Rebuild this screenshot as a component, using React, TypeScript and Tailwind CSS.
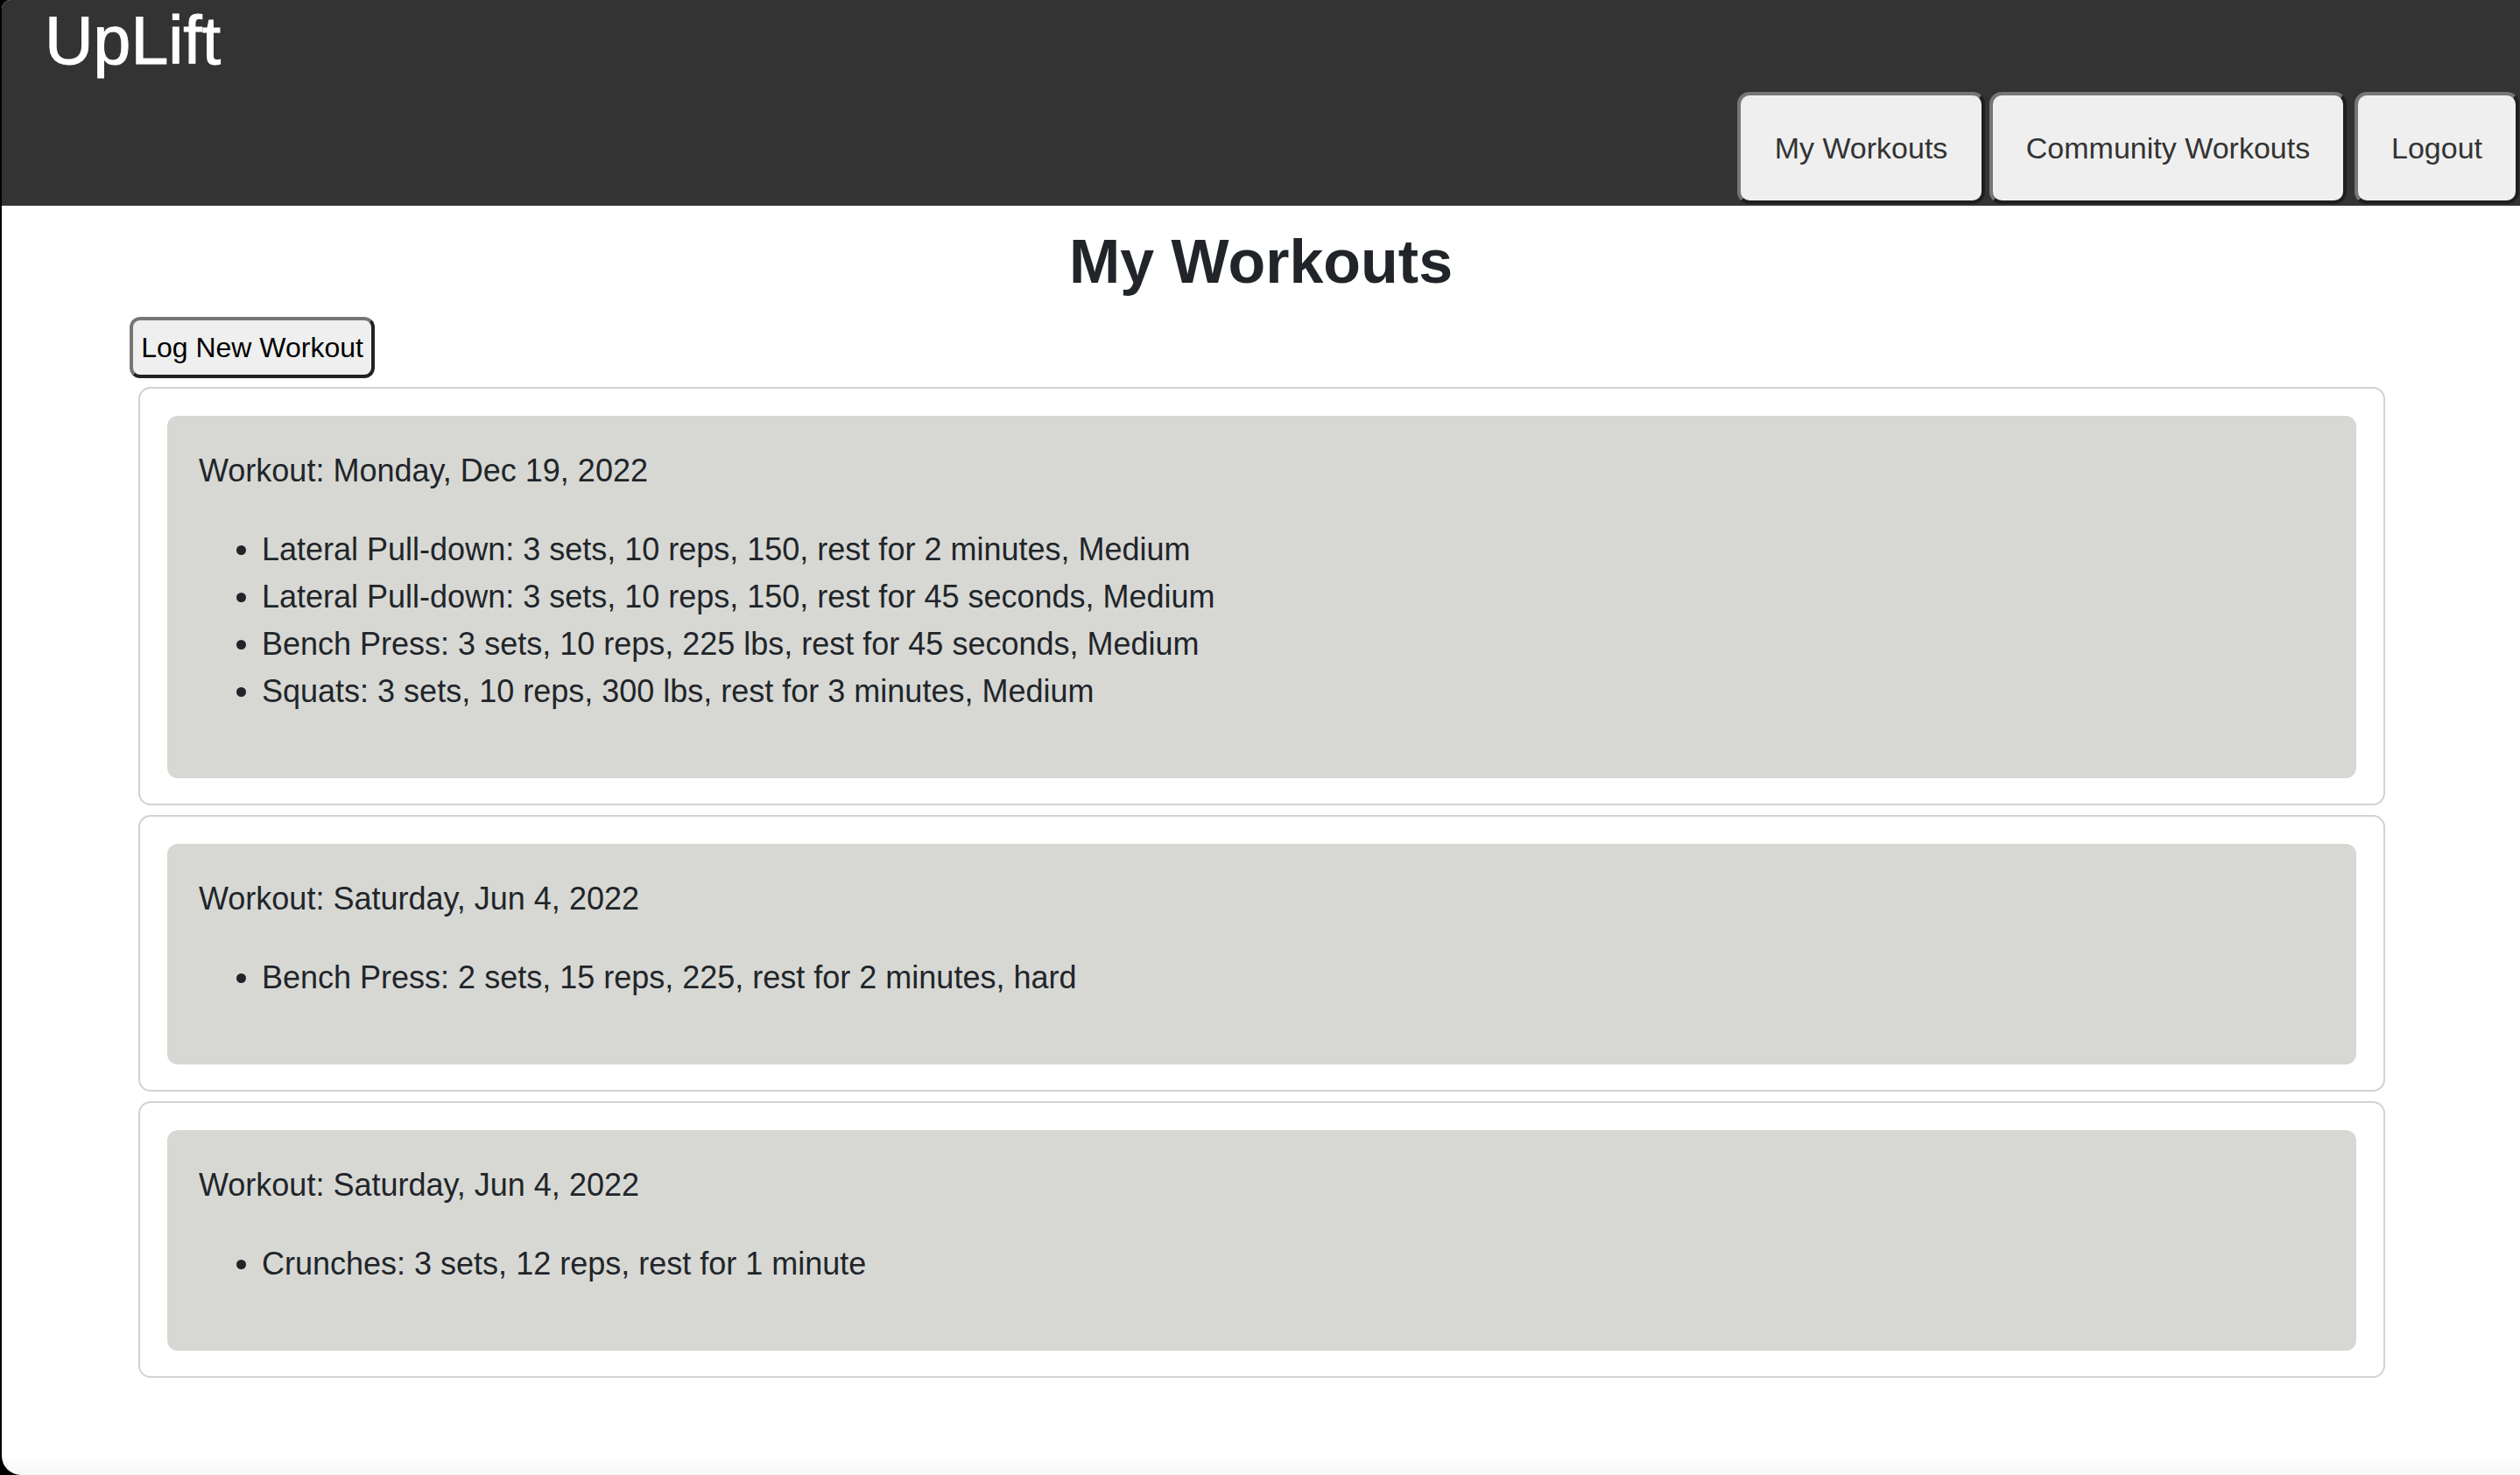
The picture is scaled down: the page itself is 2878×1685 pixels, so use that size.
import React from "react";

const workouts = [
  {
    title: "Workout: Monday, Dec 19, 2022",
    items: [
      "Lateral Pull-down: 3 sets, 10 reps, 150, rest for 2 minutes, Medium",
      "Lateral Pull-down: 3 sets, 10 reps, 150, rest for 45 seconds, Medium",
      "Bench Press: 3 sets, 10 reps, 225 lbs, rest for 45 seconds, Medium",
      "Squats: 3 sets, 10 reps, 300 lbs, rest for 3 minutes, Medium",
    ],
  },
  {
    title: "Workout: Saturday, Jun 4, 2022",
    items: ["Bench Press: 2 sets, 15 reps, 225, rest for 2 minutes, hard"],
  },
  {
    title: "Workout: Saturday, Jun 4, 2022",
    items: ["Crunches: 3 sets, 12 reps, rest for 1 minute"],
  },
];

function NavButton({ label, width }: { label: string; width: string }) {
  return (
    <button
      className={`${width} h-[128px] rounded-[14px] border-4 border-t-[#767676] border-l-[#767676] border-r-[#1f1f1f] border-b-[#1f1f1f] bg-[#efefef] text-[34px] text-[#333333]`}
    >
      {label}
    </button>
  );
}

export default function App() {
  return (
    <div className="h-[1685px] w-full overflow-hidden bg-black font-['Liberation_Sans',Arial,sans-serif]">
      <div className="ml-[2px] h-full overflow-hidden rounded-tl-[10px] rounded-bl-[22px] bg-white bg-gradient-to-b from-white from-[98.5%] to-[#f7f7f7]">
        <header className="flex h-[235px] flex-col bg-[#333333]">
          <h1 className="pl-[49px] pt-[8px] text-[77px] leading-none font-normal text-white [-webkit-text-stroke:1px_white]">
            UpLift
          </h1>
          <nav className="mt-auto mb-[2px] mr-[1px] flex items-end justify-end">
            <NavButton label="My Workouts" width="w-[283px]" />
            <div className="w-[5px]" />
            <NavButton label="Community Workouts" width="w-[408px]" />
            <div className="w-[9px]" />
            <NavButton label="Logout" width="w-[188px]" />
          </nav>
        </header>

        <main className="px-[146px]">
          <h2 className="mt-[22px] text-center text-[70px] font-bold leading-[84px] text-[#212529]">
            My Workouts
          </h2>
          <button className="mt-[21px] h-[70px] w-[280px] rounded-[12px] border-4 border-t-[#767676] border-l-[#767676] border-r-[#222222] border-b-[#222222] bg-[#efefef] text-[32px] text-black">
            Log New Workout
          </button>

          <div className="mt-[10px] ml-[10px] mr-[8px] flex flex-col gap-[11px]">
            {workouts.map((w, i) => (
              <div
                key={i}
                className="rounded-[14px] border-2 border-[#d2d2d2] bg-white px-[31px] pt-[31px] pb-[29px]"
              >
                <div className="rounded-[12px] bg-[#d7d8d4] p-[36px] text-[36px] leading-[54px] text-[#212529]">
                  <p className="mb-[36px]">{w.title}</p>
                  <ul className="mb-[36px] list-disc pl-[72px]">
                    {w.items.map((it, j) => (
                      <li key={j}>{it}</li>
                    ))}
                  </ul>
                </div>
              </div>
            ))}
          </div>
        </main>
      </div>
    </div>
  );
}
